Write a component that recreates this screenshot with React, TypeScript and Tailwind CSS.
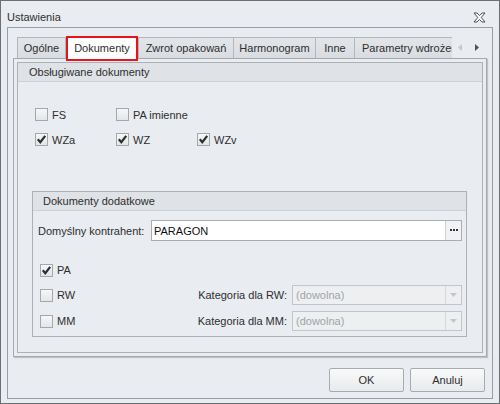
import React from "react";

function Check({ checked = false }: { checked?: boolean }) {
  return (
    <span className="w-[13px] h-[13px] shrink-0 border border-[#a4a8ad] bg-gradient-to-b from-[#f6f7f8] to-[#e3e5e8] flex items-center justify-center">
      {checked && (
        <svg width="11" height="11" viewBox="0 0 11 11">
          <path d="M1.8 5.3 L4.3 8.2 L9.2 1.8" fill="none" stroke="#2f2f2f" strokeWidth="2.2" />
        </svg>
      )}
    </span>
  );
}

function CheckItem({ label, checked, w }: { label: string; checked?: boolean; w: string }) {
  return (
    <div className={`flex items-center gap-[4px] ${w}`}>
      <Check checked={checked} />
      <span className="pt-[1px]">{label}</span>
    </div>
  );
}

function Select({ value }: { value: string }) {
  return (
    <div className="w-[170px] h-[20px] border border-[#c2c5c9] bg-[#eeeff1] flex items-center">
      <span className="flex-1 pl-[3px] pt-[1px] text-[#a0a4a9]">{value}</span>
      <span className="w-[16px] h-full border-l border-[#d6d9dc] flex items-center justify-center">
        <svg width="7" height="4" viewBox="0 0 7 4">
          <path d="M0 0 L7 0 L3.5 4 Z" fill="#c3c6ca" />
        </svg>
      </span>
    </div>
  );
}

export default function App() {
  const tabs = [
    { label: "Ogólne", w: "w-[49px]" },
    { label: "Dokumenty", w: "w-[72px]", active: true },
    { label: "Zwrot opakowań", w: "w-[96px]" },
    { label: "Harmonogram", w: "w-[83px] -ml-px" },
    { label: "Inne", w: "w-[40px] -ml-px" },
  ];

  return (
    <div className="w-[500px] h-[404px] border border-[#6b7075] bg-[#e9ecf0] flex flex-col font-['Liberation_Sans',Arial,sans-serif] text-[11px] leading-[13px] text-[#2e2e2e]">
      {/* title bar */}
      <div className="h-[26px] flex items-end justify-between pl-[6px] pr-[13px] pb-[3px]">
        <span>Ustawienia</span>
        <svg width="13" height="11" viewBox="0 0 13 11" className="mb-[1px]">
          <path
            d="M1 1 L4 1 L6.5 3.6 L9 1 L12 1 L8.2 5.5 L12 10 L9 10 L6.5 7.4 L4 10 L1 10 L4.8 5.5 Z"
            fill="#fff"
            stroke="#4a4d52"
            strokeWidth="1"
            strokeLinejoin="round"
          />
        </svg>
      </div>

      <div className="flex-1 mx-[6px] mb-[4px] border border-[#999da3] flex flex-col pt-[9px] px-[5px]">
        {/* tab strip */}
        <div className="h-[21px] flex items-end relative z-10">
          <div className="w-[439px] h-full flex items-end pl-[4px] overflow-x-clip">
            {tabs.map((t) =>
              t.active ? (
                <div
                  key={t.label}
                  className={`${t.w} h-[25px] -mb-[3px] shrink-0 border-2 border-[#e4141b] bg-white flex items-center justify-center pb-[1px]`}
                >
                  {t.label}
                </div>
              ) : (
                <div
                  key={t.label}
                  className={`${t.w} h-[21px] shrink-0 border border-b-0 border-[#b3b7bc] bg-gradient-to-b from-[#e3e6e9] to-[#d9dce0] flex items-center justify-center pt-[1px]`}
                >
                  {t.label}
                </div>
              )
            )}
            <div className="w-[99px] -ml-px h-[21px] shrink-0 border-l border-t border-[#b3b7bc] bg-gradient-to-b from-[#e3e6e9] to-[#d9dce0] flex items-center pl-[7px] pt-[1px] whitespace-nowrap overflow-hidden">
              Parametry wdrożenia
            </div>
          </div>
          <div className="flex-1 h-full flex items-center gap-[13px] pl-[6px] pb-[1px]">
            <svg width="4" height="7" viewBox="0 0 4 7">
              <path d="M4 0 L4 7 L0 3.5 Z" fill="#c4c7cb" />
            </svg>
            <svg width="4" height="7" viewBox="0 0 4 7">
              <path d="M0 0 L0 7 L4 3.5 Z" fill="#4e5156" />
            </svg>
          </div>
        </div>

        {/* tab page */}
        <div className="h-[299px] border border-[#a5a9ae] shadow-[1px_1px_1px_rgba(0,0,0,0.18)] p-[3px] flex">
          <div className="flex-1 border border-[#adb1b6] flex flex-col">
            <div className="h-[19px] border-b border-[#cdd0d4] bg-[#dfe2e6] flex items-center pl-[11px] pt-[1px]">
              Obsługiwane dokumenty
            </div>

            <div className="flex flex-col gap-[12px] pl-[17px] pt-[26px]">
              <div className="flex h-[13px]">
                <CheckItem label="FS" w="w-[81px]" />
                <CheckItem label="PA imienne" w="w-[81px]" />
              </div>
              <div className="flex h-[13px]">
                <CheckItem label="WZa" checked w="w-[81px]" />
                <CheckItem label="WZ" checked w="w-[81px]" />
                <CheckItem label="WZv" checked w="w-[81px]" />
              </div>
            </div>

            {/* Dokumenty dodatkowe */}
            <div className="mt-[45px] ml-[14px] mr-[15px] border border-[#adb1b6] flex flex-col pb-[5px]">
              <div className="h-[19px] border-b border-[#cdd0d4] bg-[#dfe2e6] flex items-center pl-[10px] pt-[1px]">
                Dokumenty dodatkowe
              </div>

              <div className="mt-[9px] h-[21px] flex items-center pl-[5px] pr-[4px]">
                <span className="w-[113px] shrink-0 pt-[1px]">Domyślny kontrahent:</span>
                <div className="flex-1 h-full border border-[#a9adb2] bg-white flex items-center">
                  <span className="flex-1 pl-[2px] pt-[1px] text-[#111]">PARAGON</span>
                  <span className="w-[16px] h-full border-l border-[#cfd2d6] bg-[#f1f2f4] flex items-center justify-center gap-[1px] pb-[1px]">
                    <span className="w-[2px] h-[2px] bg-[#333]" />
                    <span className="w-[2px] h-[2px] bg-[#333]" />
                    <span className="w-[2px] h-[2px] bg-[#333]" />
                  </span>
                </div>
              </div>

              <div className="mt-[19px] h-[20px] flex items-center pl-[7px]">
                <CheckItem label="PA" checked w="w-[80px]" />
              </div>

              <div className="mt-[5px] h-[20px] flex items-center pl-[7px] pr-[4px]">
                <CheckItem label="RW" w="w-[80px]" />
                <span className="flex-1 text-right pr-[5px] pt-[1px]">Kategoria dla RW:</span>
                <Select value="(dowolna)" />
              </div>

              <div className="mt-[6px] h-[20px] flex items-center pl-[7px] pr-[4px]">
                <CheckItem label="MM" w="w-[80px]" />
                <span className="flex-1 text-right pr-[5px] pt-[1px]">Kategoria dla MM:</span>
                <Select value="(dowolna)" />
              </div>
            </div>
          </div>
        </div>

        {/* buttons */}
        <div className="mt-[11px] flex justify-end gap-[6px] pr-[2px]">
          <button className="w-[75px] h-[24px] border border-[#a7abb0] rounded-[2px] bg-gradient-to-b from-[#f8f9fa] to-[#e8eaed] text-[#2e2e2e] pt-[1px]">
            OK
          </button>
          <button className="w-[75px] h-[24px] border border-[#a7abb0] rounded-[2px] bg-gradient-to-b from-[#f8f9fa] to-[#e8eaed] text-[#2e2e2e] pt-[1px]">
            Anuluj
          </button>
        </div>
      </div>
    </div>
  );
}
